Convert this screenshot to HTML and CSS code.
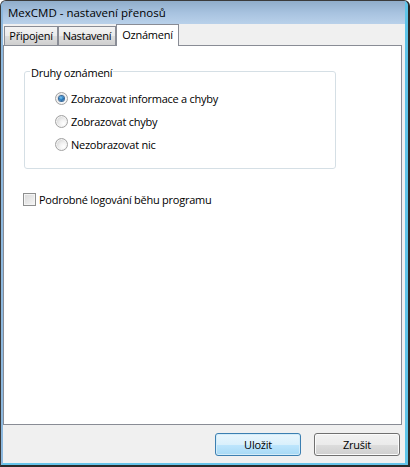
FILE: index.html
```html
<!DOCTYPE html>
<html lang="cs">
<head>
<meta charset="utf-8">
<title>MexCMD - nastavení přenosů</title>
<link rel="stylesheet" href="styles.css">
</head>
<body>
<div class="window">
  <div class="frame">
    <div class="titlebar"><span class="title">MexCMD - nastavení přenosů</span></div>
    <div class="client">
      <div class="tabs">
        <div class="tab t1">Připojení</div>
        <div class="tab t2">Nastavení</div>
        <div class="tab t3 active">Oznámení</div>
      </div>
      <div class="panel">
        <fieldset class="group">
          <legend class="legend">Druhy oznámení</legend>
          <div class="options">
            <label class="opt"><span class="radio checked"></span><span class="lbl">Zobrazovat informace a chyby</span></label>
            <label class="opt"><span class="radio"></span><span class="lbl">Zobrazovat chyby</span></label>
            <label class="opt"><span class="radio"></span><span class="lbl">Nezobrazovat nic</span></label>
          </div>
        </fieldset>
        <label class="check-row"><span class="checkbox"></span><span class="lbl">Podrobné logování běhu programu</span></label>
      </div>
      <div class="footer">
        <button class="btn btn-default" type="button">Uložit</button>
        <button class="btn" type="button">Zrušit</button>
      </div>
    </div>
  </div>
</div>
</body>
</html>
```
FILE: styles.css
```css
html, body {
  margin: 0;
  padding: 0;
  background: #ffffff;
}
body {
  width: 410px;
  height: 467px;
  overflow: hidden;
  font-family: "Open Sans", "Noto Sans", sans-serif;
  font-size: 11px;
  letter-spacing: -0.25px;
  color: #000;
}
.window {
  box-sizing: border-box;
  width: 410px;
  height: 467px;
  border-top: 1px solid #3b3b3b;
  border-left: 1px solid #3b3b3b;
  border-right: 2px solid #2a2a2a;
  border-bottom: 2px solid #2a2a2a;
  border-radius: 6px 6px 0 0;
  overflow: hidden;
  background: #91aecb;
}
.frame {
  box-sizing: border-box;
  height: 100%;
  display: flex;
  flex-direction: column;
  border-left: 2px solid #8db9df;
  border-right: 3px solid #5ec4e8;
  border-bottom: 2px solid #66c4ea;
}
.titlebar {
  height: 23px;
  flex: none;
  display: flex;
  align-items: center;
  padding-left: 5px;
  background: linear-gradient(#90adca, #a7c2df 50%, #b9d1ea);
  font-size: 11.5px;
  letter-spacing: 0;
}
.title {
  padding-bottom: 1px;
}
.client {
  flex: 1;
  display: flex;
  flex-direction: column;
  background: #f0f0f0;
}
.tabs {
  height: 21px;
  flex: none;
  display: flex;
  align-items: flex-end;
  padding-left: 1px;
  position: relative;
  z-index: 1;
}
.tab {
  box-sizing: border-box;
  height: 19px;
  border: 1px solid #898c95;
  border-bottom: none;
  background: linear-gradient(#f3f3f3, #ebebeb 50%, #dddddd 51%, #cfcfcf);
  display: flex;
  align-items: center;
  justify-content: center;
  padding-bottom: 1px;
}
.t1 { width: 54px; }
.t2 { width: 58px; }
.t3 { width: 63px; }
.tab.active {
  height: 22px;
  margin-bottom: -1px;
  background: #ffffff;
  padding-bottom: 2px;
}
.panel {
  box-sizing: border-box;
  height: 380px;
  flex: none;
  margin-right: 3px;
  border: 1px solid #898c95;
  background: #ffffff;
  padding: 15px 0 0 20px;
}
.group {
  box-sizing: border-box;
  width: 312px;
  height: 108px;
  margin: 0;
  padding: 0;
  border: 1px solid #d5dfe5;
  border-radius: 3px;
}
.legend {
  margin-left: 5px;
  padding: 4px 1px 0 1px;
  line-height: 16px;
}
.options {
  display: flex;
  flex-direction: column;
  padding: 6px 0 0 30px;
}
.opt {
  height: 23px;
  flex: none;
  display: flex;
  align-items: center;
}
.lbl {
  margin-left: 3px;
}
.radio {
  box-sizing: border-box;
  width: 13px;
  height: 13px;
  border-radius: 50%;
  border: 1px solid #a2a2a2;
  background: radial-gradient(circle at 70% 70%, #ffffff 0, #f2f2f2 35%, #d4d4d4 80%);
  box-shadow: inset 0 0 0 1px #f4f4f4;
  display: flex;
  align-items: center;
  justify-content: center;
}
.radio.checked::after {
  content: "";
  width: 5px;
  height: 5px;
  border-radius: 50%;
  background: radial-gradient(circle at 40% 35%, #7ec8f4 0, #2a7fc2 45%, #0f3f78 100%);
  box-shadow: 0 0 0 1px #3a6a9a;
}
.check-row {
  margin: 24px 0 0 -1px;
  display: flex;
  align-items: center;
  height: 13px;
}
.checkbox {
  box-sizing: border-box;
  width: 13px;
  height: 13px;
  border: 1px solid #8e8f8f;
  background: linear-gradient(135deg, #d8d8d8, #f6f6f6);
  box-shadow: inset 0 0 0 1px #f4f4f4;
}
.footer {
  flex: 1;
  display: flex;
  justify-content: flex-end;
  gap: 13px;
  padding: 8px 5px 0 0;
}
.btn {
  box-sizing: border-box;
  width: 86px;
  height: 23px;
  margin: 0;
  padding: 0 0 1px 0;
  font-family: inherit;
  font-size: 11px;
  letter-spacing: -0.25px;
  color: #000;
  border: 1px solid #707070;
  border-radius: 3px;
  background: linear-gradient(#f2f2f2, #ebebeb 50%, #dddddd 51%, #cfcfcf);
  box-shadow: inset 0 0 0 1px #fbfbfb;
}
.btn-default {
  border-color: #3c7fb1;
  background: linear-gradient(#eaf6fd, #d9f0fc 50%, #bee6fd 51%, #a7d9f5);
  box-shadow: inset 0 0 0 1px #d3ecf9;
}
```
